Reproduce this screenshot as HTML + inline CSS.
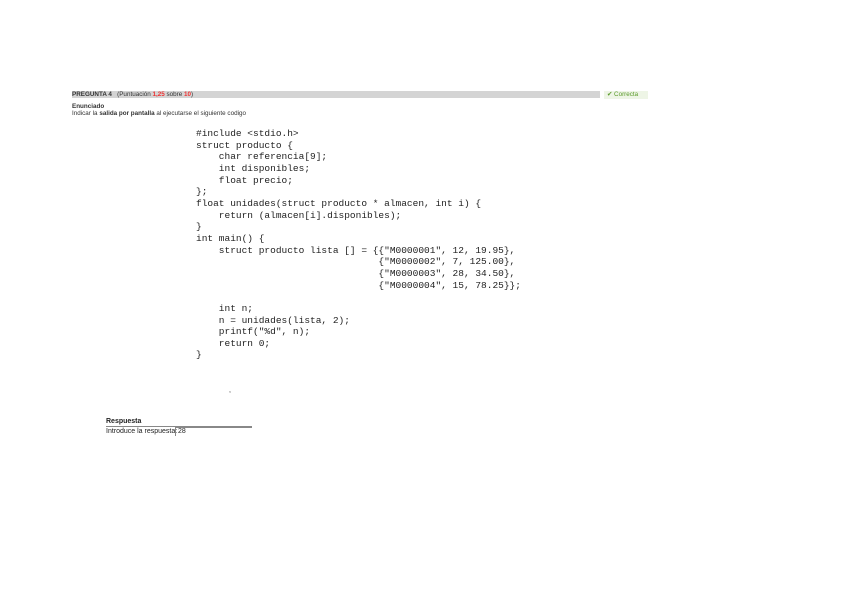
<!DOCTYPE html>
<html><head><meta charset="utf-8"><style>
body{margin:0;width:848px;height:599px;background:#fff;position:relative;overflow:hidden;font-family:"Liberation Sans",sans-serif}
.bar{position:absolute;left:72px;top:91px;width:528px;height:7px;background:#d4d4d4}
.t{position:absolute;white-space:pre;color:#333}
pre{position:absolute;left:196px;top:128px;margin:0;font-family:"Liberation Mono",monospace;font-size:9.5px;line-height:11.65px;color:#222;letter-spacing:0}
</style></head><body>
<div class="bar"></div>
<div class="t" style="left:72px;top:90px;font-size:6.3px;line-height:9px"><b>PREGUNTA 4</b>   (Puntuación <b style="color:#e33">1,25</b> sobre <b style="color:#e33">10</b>)</div>
<div style="position:absolute;left:604px;top:91px;width:44px;height:8px;background:#eef5e6"></div>
<div class="t" style="left:607px;top:90px;font-size:6.3px;line-height:9px;color:#5a9a2a">✔ Correcta</div>
<div class="t" style="left:72px;top:103px;font-size:6.3px;line-height:7px"><b>Enunciado</b>
Indicar la <b>salida por pantalla</b> al ejecutarse el siguiente codigo</div>
<pre>#include &lt;stdio.h&gt;
struct producto {
    char referencia[9];
    int disponibles;
    float precio;
};
float unidades(struct producto * almacen, int i) {
    return (almacen[i].disponibles);
}
int main() {
    struct producto lista [] = {{"M0000001", 12, 19.95},
                                {"M0000002", 7, 125.00},
                                {"M0000003", 28, 34.50},
                                {"M0000004", 15, 78.25}};

    int n;
    n = unidades(lista, 2);
    printf("%d", n);
    return 0;
}</pre>
<div class="t" style="left:229px;top:387px;font-size:7px">,</div>
<div class="t" style="left:106px;top:418px;font-size:7px;font-weight:bold;color:#222">Respuesta</div>
<div style="position:absolute;left:106px;top:426px;width:146px;height:1px;background:#888"></div>
<div class="t" style="left:106px;top:427px;font-size:7px;line-height:9px;color:#222">Introduce la respuesta:</div>
<div style="position:absolute;left:175px;top:427px;width:76px;height:8px;border-left:1px solid #888;border-top:1px solid #888"></div>
<div class="t" style="left:178px;top:427px;font-size:7px;line-height:9px;color:#222">28</div>
</body></html>
